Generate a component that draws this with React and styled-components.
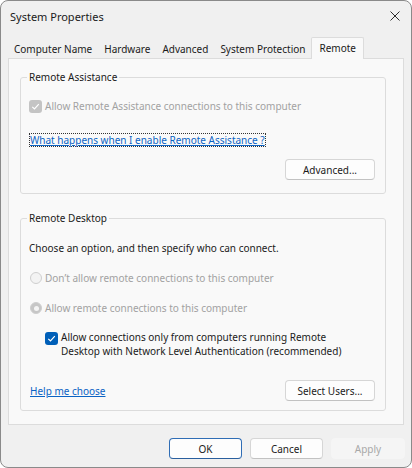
import styled, { createGlobalStyle } from "styled-components";

const GlobalStyle = createGlobalStyle`
  html, body {
    margin: 0;
    padding: 0;
    background: #ffffff;
  }
  body {
    font-family: "Segoe UI", "Noto Sans", sans-serif;
    font-size: 10px;
    color: #1b1b1b;
  }
  * {
    box-sizing: border-box;
  }
`;

const Window = styled.div`
  width: 412px;
  height: 468px;
  border: 1px solid #8a8a8a;
  border-radius: 8px;
  background: #f0f0f0;
  display: flex;
  flex-direction: column;
  overflow: hidden;
`;

const TitleBar = styled.div`
  height: 30px;
  flex: none;
  display: flex;
  align-items: center;
  justify-content: space-between;
  padding-left: 9px;
  font-size: 11px;
  color: #1a1a1a;
`;

const CloseButton = styled.div`
  width: 32px;
  height: 30px;
  display: flex;
  align-items: center;
  justify-content: center;
`;

const TabStrip = styled.div`
  margin-top: 6px;
  padding-left: 7px;
  display: flex;
  align-items: flex-end;
  flex: none;
`;

const Tab = styled.div`
  position: relative;
  height: ${(p) => (p.$active ? "22px" : "19px")};
  margin-bottom: ${(p) => (p.$active ? "-1px" : "0")};
  padding: ${(p) => (p.$active ? "0 7px 2px 7px" : "0 6px")};
  display: flex;
  align-items: center;
  background: ${(p) => (p.$active ? "#f9f9f9" : "#f0f0f0")};
  border: ${(p) => (p.$active ? "1px solid #dcdcdc" : "none")};
  border-bottom: none;
  border-radius: 2px 2px 0 0;
  z-index: ${(p) => (p.$active ? 1 : 0)};
  color: #1a1a1a;
  white-space: nowrap;
`;

const Panel = styled.div`
  margin: 0 7px;
  height: 367px;
  flex: none;
  border: 1px solid #dcdcdc;
  background: #f9f9f9;
  padding: 12px 0 0 11px;
`;

const Group = styled.fieldset`
  width: 366px;
  margin: ${(p) => (p.$first ? "0" : "18px 0 0")};
  padding: 0 10px ${(p) => p.$bottom}px 8px;
  border: 1px solid #dcdcdc;
  border-radius: 3px;
  min-width: 0;
  display: flex;
  flex-direction: column;
`;

const Legend = styled.legend`
  margin-left: -2px;
  padding: 0 2px;
  line-height: 12px;
  color: #1a1a1a;
`;

const Row = styled.div`
  margin-top: ${(p) => p.$top}px;
  height: ${(p) => p.$h || 14}px;
  display: flex;
  align-items: center;
  justify-content: ${(p) => p.$justify || "flex-start"};
  gap: ${(p) => p.$gap ?? 3}px;
  color: ${(p) => (p.$disabled ? "#a2a2a2" : "#1b1b1b")};
  white-space: nowrap;
`;

const Indented = styled.div`
  margin-top: 15px;
  padding-left: 16px;
  display: flex;
  align-items: flex-start;
  gap: 3px;
  line-height: 14px;
  color: #1b1b1b;
`;

const Box = styled.span`
  flex: none;
  width: 13px;
  height: 13px;
  margin-top: ${(p) => p.$nudge || 0}px;
  border-radius: 3px;
  background: ${(p) => (p.$disabled ? "#c4c4c4" : "#005fb8")};
  display: flex;
  align-items: center;
  justify-content: center;
`;

const Radio = styled.span`
  flex: none;
  width: 12px;
  height: 12px;
  border-radius: 50%;
  border: 1px solid #cfcfcf;
  background: ${(p) => (p.$checked ? "#c6c6c6" : "#f3f3f3")};
  display: flex;
  align-items: center;
  justify-content: center;
  margin-left: 1px;

  &::after {
    content: "";
    display: ${(p) => (p.$checked ? "block" : "none")};
    width: 5px;
    height: 5px;
    border-radius: 50%;
    background: #f4f4f4;
  }
`;

const Link = styled.a`
  color: #0b63c4;
  text-decoration: underline;
  cursor: pointer;
  line-height: 12px;
  border: 1px dotted ${(p) => (p.$focused ? "#333" : "transparent")};
`;

const Button = styled.button`
  width: ${(p) => p.$w || 90}px;
  height: 21px;
  padding: 0;
  font: inherit;
  color: ${(p) => (p.disabled ? "#a8a8a8" : "#1b1b1b")};
  background: ${(p) => (p.disabled ? "#f5f5f5" : "#fdfdfd")};
  border: 1px solid
    ${(p) => (p.$primary ? "#2f6db5" : p.disabled ? "#f5f5f5" : "#d6d6d6")};
  border-bottom-color: ${(p) =>
    p.$primary ? "#2a5f9e" : p.disabled ? "#f5f5f5" : "#c2c2c2"};
  border-radius: 4px;
`;

const Footer = styled.div`
  margin-top: 13px;
  padding-right: 6px;
  display: flex;
  justify-content: flex-end;
  gap: 8px;
`;

const Check = () => (
  <svg width="9" height="9" viewBox="0 0 9 9">
    <path d="M1.3 4.8 L3.5 7 L7.8 2.2" fill="none" stroke="#fff" strokeWidth="1.2" />
  </svg>
);

export default function App() {
  return (
    <>
      <GlobalStyle />
      <Window>
        <TitleBar>
          System Properties
          <CloseButton>
            <svg width="10" height="10" viewBox="0 0 10 10">
              <path d="M0.5 0.5 L9.5 9.5 M9.5 0.5 L0.5 9.5" stroke="#2b2b2b" strokeWidth="1" />
            </svg>
          </CloseButton>
        </TitleBar>

        <TabStrip>
          <Tab>Computer Name</Tab>
          <Tab>Hardware</Tab>
          <Tab>Advanced</Tab>
          <Tab>System Protection</Tab>
          <Tab $active>Remote</Tab>
        </TabStrip>

        <Panel>
          <Group $first $bottom={13}>
            <Legend>Remote Assistance</Legend>
            <Row $top={16} $disabled>
              <Box $disabled>
                <Check />
              </Box>
              Allow Remote Assistance connections to this computer
            </Row>
            <Row $top={20} $gap={0}>
              <Link $focused>What happens when I enable Remote Assistance ?</Link>
            </Row>
            <Row $top={12} $h={21} $justify="flex-end">
              <Button>Advanced...</Button>
            </Row>
          </Group>

          <Group $bottom={9}>
            <Legend>Remote Desktop</Legend>
            <Row $top={17}>Choose an option, and then specify who can connect.</Row>
            <Row $top={16} $disabled>
              <Radio />
              Don’t allow remote connections to this computer
            </Row>
            <Row $top={16} $disabled>
              <Radio $checked />
              Allow remote connections to this computer
            </Row>
            <Indented>
              <Box $nudge={2}>
                <Check />
              </Box>
              <div>
                Allow connections only from computers running Remote
                <br />
                Desktop with Network Level Authentication (recommended)
              </div>
            </Indented>
            <Row $top={22} $h={21} $justify="space-between">
              <Link>Help me choose</Link>
              <Button>Select Users...</Button>
            </Row>
          </Group>
        </Panel>

        <Footer>
          <Button $w={73} $primary>
            OK
          </Button>
          <Button $w={73}>Cancel</Button>
          <Button $w={74} disabled>
            Apply
          </Button>
        </Footer>
      </Window>
    </>
  );
}
